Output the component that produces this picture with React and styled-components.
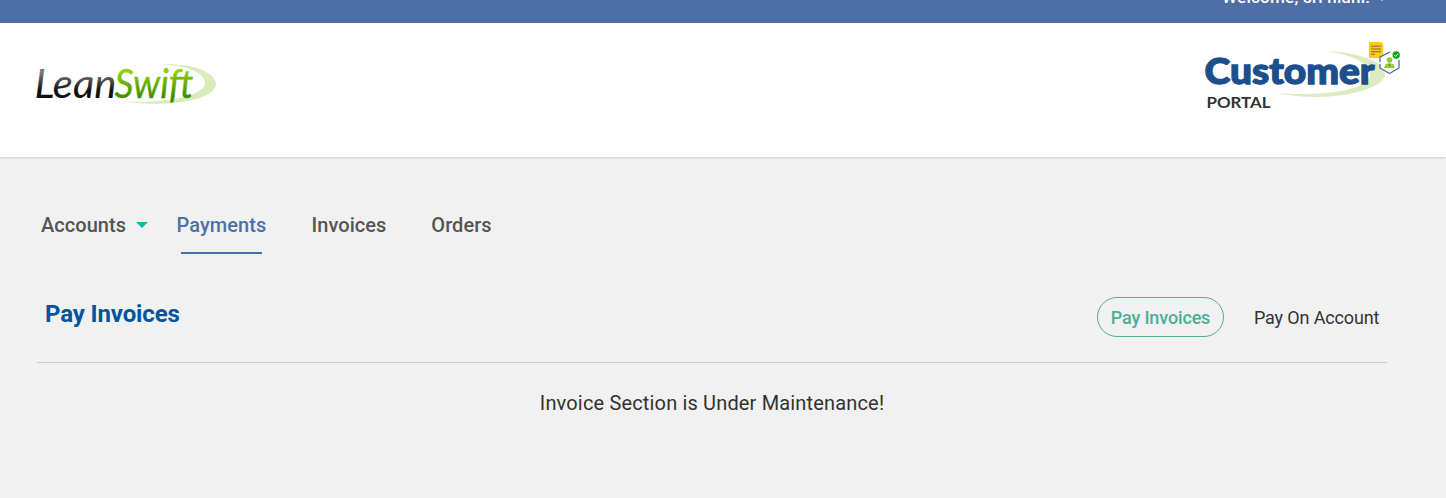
import React from "react";
import styled, { createGlobalStyle } from "styled-components";

const GlobalStyle = createGlobalStyle`
  * { box-sizing: border-box; }
  body {
    margin: 0;
    background: #f1f1f1;
    font-family: Roboto, "Liberation Sans", sans-serif;
    color: #333;
    overflow: hidden;
  }
`;

const Page = styled.div`
  min-height: 498px;
  background: #f1f1f1;
`;

const TopBar = styled.div`
  height: 23px;
  display: flex;
  justify-content: flex-end;
  align-items: flex-start;
  padding-right: 60px;
  background: #4d6fa6;
  overflow: hidden;
`;

const Welcome = styled.div`
  display: flex;
  align-items: flex-end;
  gap: 8px;
  margin-top: -13px;
  font-size: 17px;
  line-height: 20px;
  font-weight: 500;
  letter-spacing: 0.25px;
  color: #fff;
  white-space: nowrap;
`;

const Caret = styled.span`
  width: 0;
  height: 0;
  margin-bottom: ${(p) => p.$lift || 0}px;
  border-left: ${(p) => p.$size}px solid transparent;
  border-right: ${(p) => p.$size}px solid transparent;
  border-top: ${(p) => p.$size}px solid ${(p) => p.$color};
`;

const Header = styled.header`
  height: 134px;
  display: flex;
  justify-content: space-between;
  align-items: flex-start;
  padding: 17px 42px 0 30px;
  background: #fff;
  box-shadow: 0 1px 2px rgba(0, 0, 0, 0.16);
`;

const Logo = styled.svg`
  display: block;
  overflow: visible;
`;

const Nav = styled.nav`
  display: flex;
  align-items: flex-start;
  padding: 56px 0 0 40px;
  height: 99px;
`;

const NavItem = styled.a`
  display: flex;
  flex-direction: column;
  align-items: center;
  width: ${(p) => p.$width}px;
  margin-right: ${(p) => p.$gap}px;
  font-size: 20px;
  line-height: 24px;
  font-weight: 500;
  letter-spacing: 0.06px;
  white-space: nowrap;
  color: ${(p) => (p.$active ? "#4d6fa8" : "#555")};
`;

const NavLabel = styled.span`
  display: flex;
  align-items: center;
  gap: 10px;
`;

const Underline = styled.span`
  width: 81px;
  height: 2px;
  margin-top: 15px;
  background: #4d6fa8;
`;

const Section = styled.section`
  margin: 0 59px 0 37px;
`;

const SectionHead = styled.div`
  display: flex;
  justify-content: space-between;
  height: 107px;
  padding: 41px 8px 0 8px;
  border-bottom: 1px solid #cacaca;
`;

const Title = styled.h1`
  margin: 2px 0 0;
  font-size: 24px;
  line-height: 30px;
  font-weight: 700;
  letter-spacing: -0.12px;
  color: #0054a0;
`;

const Actions = styled.div`
  display: flex;
  gap: 30px;
`;

const Action = styled.button`
  height: 40px;
  padding: 1px 0 0;
  width: ${(p) => p.$width}px;
  border: ${(p) => (p.$active ? "1px solid #4fae96" : "0")};
  border-radius: 20px;
  background: transparent;
  font-family: inherit;
  font-size: 18px;
  letter-spacing: -0.15px;
  font-weight: ${(p) => (p.$active ? 500 : 400)};
  color: ${(p) => (p.$active ? "#4fae96" : "#333")};
  white-space: nowrap;
`;

const Message = styled.p`
  margin: 28px 0 0;
  font-size: 20px;
  line-height: 24px;
  letter-spacing: 0.16px;
  text-align: center;
  color: #333;
`;

function LeanSwiftLogo() {
  return (
    <Logo width="200" height="70" viewBox="30 40 200 70">
      <defs>
        <linearGradient id="ink" x1="0" y1="0" x2="0" y2="1">
          <stop offset="0.3" stopColor="#777" />
          <stop offset="0.65" stopColor="#111" />
        </linearGradient>
        <linearGradient id="leaf" x1="0" y1="0" x2="0" y2="1">
          <stop offset="0.25" stopColor="#8fd000" />
          <stop offset="0.8" stopColor="#3f8a00" />
        </linearGradient>
      </defs>
      <path
        d="M162 64 C192 63 216 72 216 84 C216 99 170 109 122 101 C165 104 205 96 205 83 C205 73 188 66 162 64Z"
        fill="#d9edba"
      />
      <g fontFamily="Lato, sans-serif" fontStyle="italic" fontSize="40">
        <text x="34.500" y="98" textLength="82" lengthAdjust="spacingAndGlyphs" fill="url(#ink)">Lean</text>
        <text x="114.500" y="98" textLength="79" lengthAdjust="spacingAndGlyphs" fill="url(#leaf)" stroke="url(#leaf)" strokeWidth="0.3">Swift</text>
      </g>
    </Logo>
  );
}

function CustomerPortalLogo() {
  return (
    <Logo width="204" height="75" viewBox="1200 40 204 75">
      <path
        d="M1325 51 C1362 53 1385 62 1385 74 C1385 90 1330 104 1276 93 C1325 97 1370 90 1370 74 C1370 63 1350 54 1325 51Z"
        fill="#dcebc0"
      />
      <text x="1204.500" y="83.5" fontFamily="Lato, sans-serif" fontWeight="900" fontSize="36.500" textLength="170" lengthAdjust="spacingAndGlyphs" fill="#1c4f8c" stroke="#1c4f8c" strokeWidth="1.300">Customer</text>
      <text x="1206.500" y="108" fontFamily="Lato, sans-serif" fontWeight="700" fontSize="15" textLength="64" lengthAdjust="spacingAndGlyphs" fill="#333">PORTAL</text>
      <path d="M1369 42 H1381 L1383.300 44 V58 H1369Z" fill="#fdcb12" />
      <path d="M1371 46.200 H1381 M1371 49 H1381 M1371 51.700 H1381 M1371 54.200 H1375" stroke="#75691f" strokeWidth="0.900" />
      <path d="M1389.500 51.500 L1380 57 V68 L1389.500 73.500 L1399 68 V57 L1394 54Z" fill="#fff" />
      <path d="M1390 51.700 L1380 57.200 V62 M1380 64 V68 L1389.500 73.500 L1399 68 V60" fill="none" stroke="#4c6fa5" strokeWidth="1.300" />
      <circle cx="1389.500" cy="60" r="2.800" fill="#94c83d" />
      <path d="M1384.500 68 C1384.500 63.500 1387 63.500 1389.500 63.500 C1392 63.500 1394.500 63.500 1394.500 68Z" fill="#94c83d" />
      <path d="M1389.500 63.500 V66" stroke="#46813a" strokeWidth="0.900" />
      <circle cx="1396.200" cy="55" r="3.700" fill="#0ea51c" />
      <path d="M1394.300 55 L1395.700 56.400 L1398.200 53.700" fill="none" stroke="#fff" strokeWidth="0.900" />
    </Logo>
  );
}

export default function App() {
  return (
    <Page>
      <GlobalStyle />
      <TopBar>
        <Welcome>
          Welcome, sri hiani!
          <Caret $size={4} $lift={6} $color="#fff" />
        </Welcome>
      </TopBar>
      <Header>
        <LeanSwiftLogo />
        <CustomerPortalLogo />
      </Header>
      <Nav>
        <NavItem $width={109} $gap={27}>
          <NavLabel>
            Accounts
            <Caret $size={6} $color="#0fb8a0" />
          </NavLabel>
        </NavItem>
        <NavItem $width={91} $gap={44} $active>
          Payments
          <Underline />
        </NavItem>
        <NavItem $width={76} $gap={44}>Invoices</NavItem>
        <NavItem $width={61} $gap={0}>Orders</NavItem>
      </Nav>
      <Section>
        <SectionHead>
          <Title>Pay Invoices</Title>
          <Actions>
            <Action $active $width={127}>Pay Invoices</Action>
            <Action $width={125}>Pay On Account</Action>
          </Actions>
        </SectionHead>
        <Message>Invoice Section is Under Maintenance!</Message>
      </Section>
    </Page>
  );
}
